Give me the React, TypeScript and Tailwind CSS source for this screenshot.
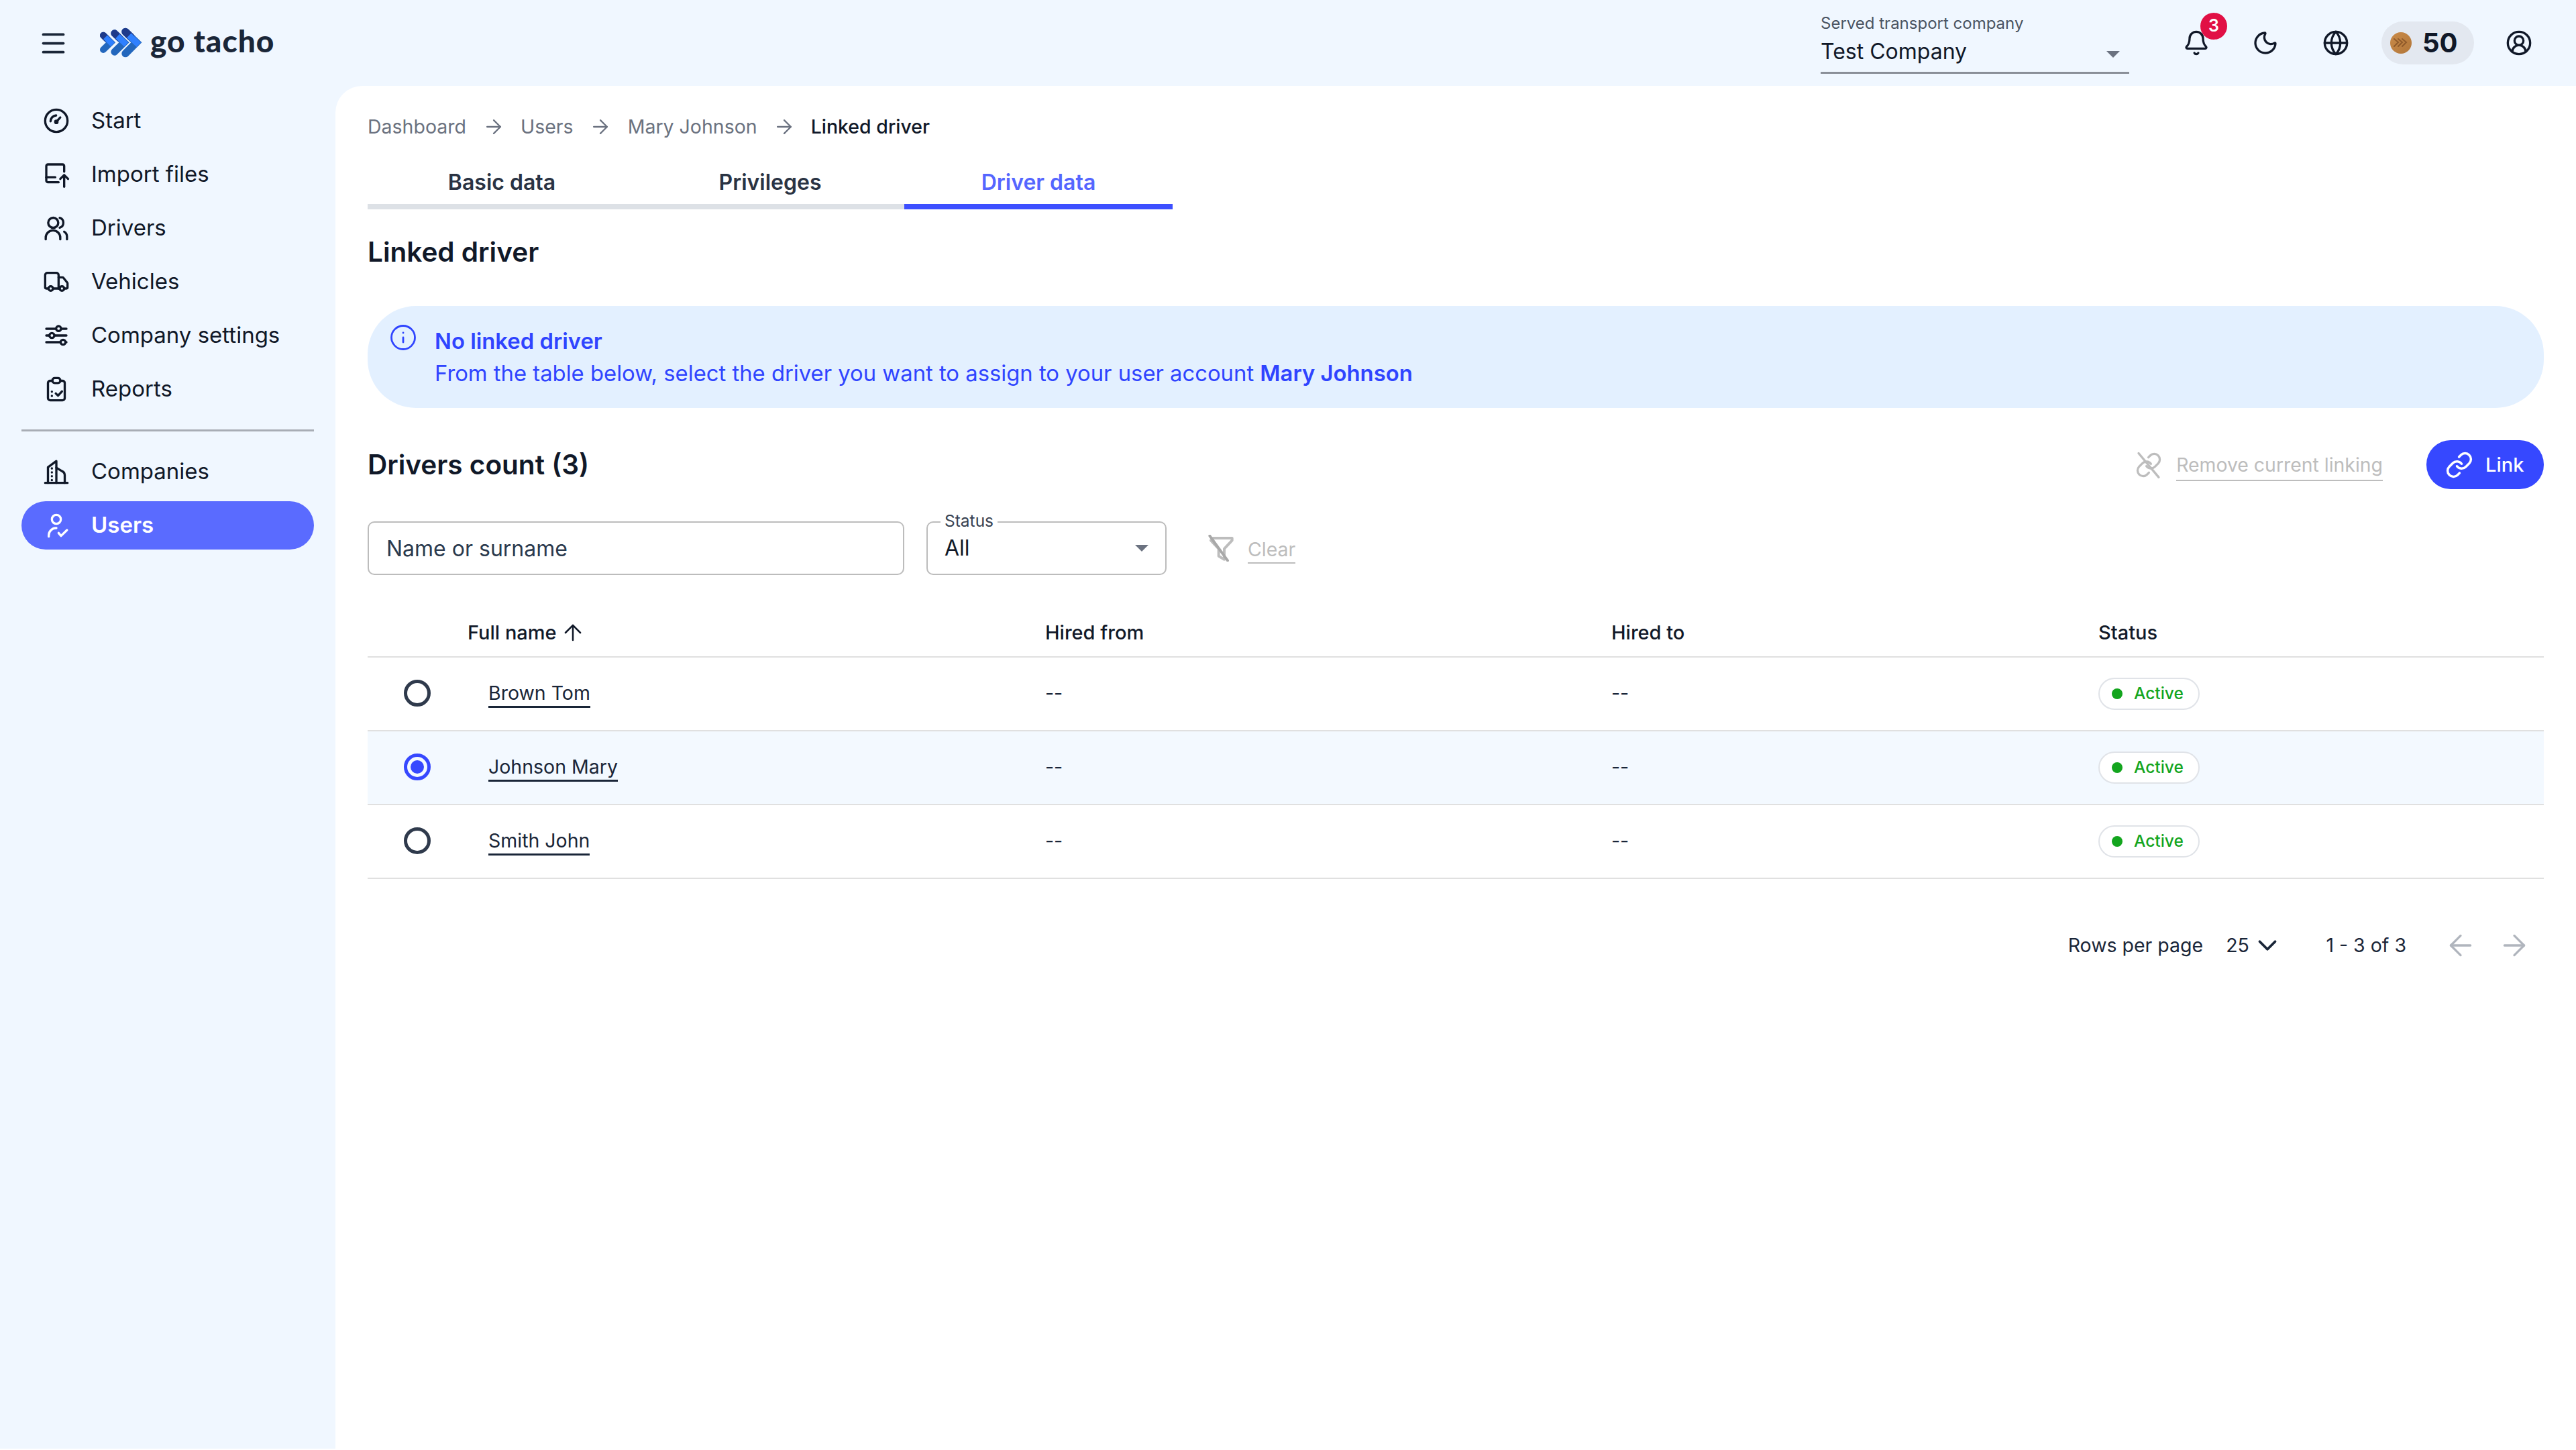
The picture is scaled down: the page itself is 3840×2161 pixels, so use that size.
import React from "react";
import { ArrowRight, ArrowUp, ArrowLeft, Bell, ChevronDown, CircleUserRound, Globe, Info, Link as LinkIcon, Menu, Moon, Truck } from "lucide-react";

function Ic({ children, className = "" }: { children: React.ReactNode; className?: string }) {
  return (
    <svg viewBox="0 0 24 24" fill="none" stroke="currentColor" strokeWidth={2} strokeLinecap="round" strokeLinejoin="round" className={"w-[40px] h-[40px] shrink-0 " + className}>
      {children}
    </svg>
  );
}

const StartIcon = () => (
  <Ic>
    <circle cx="12" cy="12" r="10" />
    <path d="M12 13l3.5-4" />
    <path d="M6.8 12.5a5.3 5.3 0 0 1 5-5.3" />
    <circle cx="12" cy="13" r="1" fill="currentColor" />
  </Ic>
);
const ImportIcon = () => (
  <Ic>
    <path d="M19 9.5V4.5A1.5 1.5 0 0 0 17.5 3H4.5A1.5 1.5 0 0 0 3 4.5v13A1.5 1.5 0 0 0 4.5 19H14" />
    <path d="M3 14.5h8" />
    <path d="M19 23V13" />
    <path d="M15.5 16l3.5-3.5 3.5 3.5" />
  </Ic>
);
const DriversIcon = () => (
  <Ic>
    <circle cx="9.2" cy="7.2" r="4.5" />
    <path d="M15 2.8a4.6 4.6 0 0 1 0 8.8" />
    <path d="M2.5 22v-1.5a6.5 6.5 0 0 1 13 0V22" />
    <path d="M19 15.2a5 5 0 0 1 2.5 4.3V22" />
  </Ic>
);
const SettingsIcon = () => (
  <Ic>
    <path d="M3 6h18M3 12h18M3 18h18" />
    <circle cx="14" cy="5.8" r="2.2" fill="#f0f7ff" />
    <circle cx="8" cy="12" r="2.2" fill="#f0f7ff" />
    <circle cx="18" cy="18" r="2.2" fill="#f0f7ff" />
  </Ic>
);
const ReportsIcon = () => (
  <Ic>
    <rect x="4.5" y="4.5" width="15" height="17.5" rx="2" />
    <rect x="8.5" y="2" width="7" height="4.5" rx="2" fill="#f0f7ff" />
    <path d="M11.5 15.8l2 2 3.5-3.8" />
    <path d="M8 14.2v.1M8 18v.1" />
  </Ic>
);
const CompaniesIcon = () => (
  <Ic>
    <path d="M2 22h20" />
    <path d="M4.5 22V8l7.5-5.5V22" />
    <path d="M12 8.5l5 3a4 4 0 0 1 2.5 3.5v7" />
    <path d="M8 9v.1M8 12.5v.1M8 16v.1M8 19.5v.1" />
  </Ic>
);
const UsersIcon = () => (
  <Ic>
    <circle cx="12" cy="6.6" r="4" />
    <path d="M5.2 22v-1.2a6.5 6.5 0 0 1 6.8-6.4" />
    <path d="M14 18.8l2.2 2.6 5.3-5.2" />
  </Ic>
);

const Logo = () => (
  <svg viewBox="0 0 240 180" fill="none" strokeLinecap="round" className="w-[80px] h-[60px] shrink-0">
    <g strokeWidth="30">
      <path d="M42 56L75 88L42 120" stroke="#2367bd" />
      <path d="M42 56L58 72" stroke="#1e3a8a" />
      <path d="M60 73L75 88" stroke="#2f80ff" strokeLinecap="square" strokeWidth="25" />
    </g>
    <g strokeWidth="32">
      <path d="M92 47L135 88L92 130" stroke="#2367bd" />
      <path d="M92 47L113 67" stroke="#1e3a8a" />
      <path d="M115 69L135 88" stroke="#2f80ff" strokeLinecap="square" strokeWidth="26" />
    </g>
    <g strokeWidth="34">
      <path d="M141 40L190 88L141 137" stroke="#2367bd" />
      <path d="M141 40L165 63" stroke="#1e3a8a" />
      <path d="M167 66L190 88" stroke="#2f80ff" strokeLinecap="square" strokeWidth="28" />
    </g>
  </svg>
);

const Caret = ({ className = "" }: { className?: string }) => (
  <svg viewBox="0 0 20 10" className={"w-[20px] h-[10px] shrink-0 " + className}>
    <polygon points="0,0 20,0 10,10" fill="#6b7280" />
  </svg>
);

const Coin = () => (
  <svg viewBox="0 0 32 32" className="w-[32px] h-[32px] shrink-0" fill="none">
    <defs>
      <linearGradient id="coin" x1="0" y1="0" x2="1" y2="1">
        <stop offset="0" stopColor="#c98a48" />
        <stop offset="1" stopColor="#b2773a" />
      </linearGradient>
    </defs>
    <circle cx="16" cy="16" r="16" fill="url(#coin)" />
    <g stroke="#8f5a2a" strokeWidth="2" strokeLinecap="round">
      <path d="M6 10l6 5-6 6" />
      <path d="M12 10l6 5-6 6" />
      <path d="M18 10l6 5-6 6" />
    </g>
  </svg>
);

const navTop = [
  { label: "Start", icon: <StartIcon /> },
  { label: "Import files", icon: <ImportIcon /> },
  { label: "Drivers", icon: <DriversIcon /> },
  { label: "Vehicles", icon: <Truck className="w-[40px] h-[40px] shrink-0" strokeWidth={2} /> },
  { label: "Company settings", icon: <SettingsIcon /> },
  { label: "Reports", icon: <ReportsIcon /> },
];

function NavItem({ label, icon, active = false }: { label: string; icon: React.ReactNode; active?: boolean }) {
  return (
    <div className={"flex items-center h-[72px] pl-[32px] gap-[32px] rounded-[36px] text-[33px] " + (active ? "bg-[#5a6bff] text-white font-semibold" : "text-[#101828]")}>
      {icon}
      <span>{label}</span>
    </div>
  );
}

const rows = [
  { name: "Brown Tom", selected: false },
  { name: "Johnson Mary", selected: true },
  { name: "Smith John", selected: false },
];

function Row({ name, selected }: { name: string; selected: boolean }) {
  return (
    <div className={"grid grid-cols-[149px_861px_844px_726px_1fr] items-center h-[110px] border-b-[2.5px] border-[#e0e0e0] text-[28.5px] text-[#1a2638] " + (selected ? "bg-[#f3f9ff]" : "")}>
      <div className="flex justify-center pr-[1px] -mt-[1px]">
        {selected ? (
          <span className="w-[40px] h-[40px] rounded-full border-[5px] border-[#3648ff] flex items-center justify-center">
            <span className="w-[20px] h-[20px] rounded-full bg-[#3648ff]" />
          </span>
        ) : (
          <span className="w-[40px] h-[40px] rounded-full border-[5px] border-[#2f3a4c]" />
        )}
      </div>
      <div className="pl-[31px]">
        <span className="border-b-[3px] border-[#1a2638] pb-[1px] leading-[36px] inline-block">{name}</span>
      </div>
      <div>--</div>
      <div>--</div>
      <div>
        <span className="inline-flex items-center w-[151px] h-[48px] pl-[18px] gap-[17px] rounded-full border-[2.5px] border-[#e0e3e8] bg-white text-[24.5px] font-medium text-[#13a51e]">
          <span className="w-[16px] h-[16px] rounded-full bg-[#13a51e]" />
          Active
        </span>
      </div>
    </div>
  );
}

export default function App() {
  return (
    <div className="w-[3840px] h-[2159px] bg-[#f0f7ff] flex flex-col font-['Inter',sans-serif] overflow-hidden">
      <header className="h-[128px] shrink-0 flex items-center pl-[57px] pr-[65px]">
        <Menu className="w-[45px] h-[45px] text-[#1a2638] shrink-0" strokeWidth={2} />
        <div className="ml-[38px]"><Logo /></div>
        <span className="ml-[4px] font-['Lato',sans-serif] font-black text-[46px] tracking-[1px] text-[#1a2638] leading-none -mt-[6px]">go tacho</span>
        <div className="ml-auto self-start w-[460px] h-[110px] flex flex-col border-b-[3px] border-[#8a8f98]">
          <span className="text-[24px] leading-[30px] text-[#4b5563] mt-[20px]">Served transport company</span>
          <div className="flex items-center justify-between pr-[14px] mt-[5px]">
            <span className="text-[32px] leading-[44px] text-[#101828]">Test Company</span>
            <Caret className="mt-[8px]" />
          </div>
        </div>
        <div className="relative ml-[80px]">
          <Bell className="w-[40px] h-[40px] text-[#101828]" strokeWidth={2} />
          <span className="absolute left-[26px] -top-[25px] w-[40px] h-[40px] rounded-full bg-[#e11045] text-white text-[25px] font-semibold flex items-center justify-center">3</span>
        </div>
        <Moon className="w-[40px] h-[40px] ml-[63px] text-[#101828]" strokeWidth={2} />
        <Globe className="w-[40px] h-[40px] ml-[65px] text-[#101828]" strokeWidth={2} />
        <div className="ml-[48px] w-[138px] h-[64px] rounded-[32px] bg-[#e3e8f0] flex items-center pl-[13px] gap-[16px]">
          <Coin />
          <span className="text-[40px] font-bold text-[#101828] leading-none">50</span>
        </div>
        <CircleUserRound className="w-[40px] h-[40px] ml-[47px] text-[#101828]" strokeWidth={2} />
      </header>

      <div className="flex flex-1 min-h-0">
        <aside className="w-[500px] shrink-0 px-[32px] pt-[16px]">
          <nav className="flex flex-col gap-[8px]">
            {navTop.map((n) => (
              <NavItem key={n.label} label={n.label} icon={n.icon} />
            ))}
          </nav>
          <div className="h-[2.5px] bg-[#a8adb5] mt-[24px] mb-[24px]" />
          <nav className="flex flex-col gap-[8px]">
            <NavItem label="Companies" icon={<CompaniesIcon />} />
            <NavItem label="Users" icon={<UsersIcon />} active />
          </nav>
        </aside>

        <main className="flex-1 bg-white rounded-tl-[40px] pl-[48px] pr-[48px] pt-[41px] text-[#101828]">
          <div className="flex items-center h-[40px] text-[28.5px] text-[#6b7280]">
            <span>Dashboard</span>
            <ArrowRight className="w-[34px] h-[34px] mx-[23.5px] shrink-0" strokeWidth={1.6} />
            <span>Users</span>
            <ArrowRight className="w-[34px] h-[34px] mx-[23.5px] shrink-0" strokeWidth={1.6} />
            <span>Mary Johnson</span>
            <ArrowRight className="w-[34px] h-[34px] mx-[23px] shrink-0" strokeWidth={1.6} />
            <span className="font-medium text-[#101828]">Linked driver</span>
          </div>

          <div className="flex mt-[23px] text-[32px] font-semibold">
            <div className="w-[400px] h-[80px] pt-[8px] flex items-center justify-center border-b-[8px] border-[#dde1e6] text-[#2a3343]">Basic data</div>
            <div className="w-[400px] h-[80px] pt-[8px] flex items-center justify-center border-b-[8px] border-[#dde1e6] text-[#2a3343]">Privileges</div>
            <div className="w-[400px] h-[80px] pt-[8px] flex items-center justify-center border-b-[8px] border-[#3d4fff] text-[#5566ff]">Driver data</div>
          </div>

          <h1 className="mt-[34px] h-[60px] leading-[60px] text-[40.5px] font-semibold">Linked driver</h1>

          <div className="mt-[50px] h-[152px] rounded-[72px] bg-[#e3f0ff] flex pl-[32px] text-[#2f44ff] text-[32.8px]">
            <Info className="w-[42px] h-[42px] mt-[26px] shrink-0" strokeWidth={1.6} />
            <div className="ml-[26px] pt-[27px]">
              <div className="h-[50px] leading-[50px] font-semibold">No linked driver</div>
              <div className="h-[47px] leading-[47px]">
                From the table below, select the driver you want to assign to your user account <span className="font-semibold">Mary Johnson</span>
              </div>
            </div>
          </div>

          <div className="mt-[48px] h-[73px] flex items-center">
            <h2 className="text-[40.5px] font-semibold pt-[2px]">Drivers count (3)</h2>
            <div className="ml-auto flex items-center text-[#bdbdbd]">
              <svg viewBox="0 0 24 24" fill="none" stroke="currentColor" strokeWidth={2} strokeLinecap="round" className="w-[40px] h-[44px] shrink-0">
                <path d="M10 13a5 5 0 0 0 7.54.54l3-3a5 5 0 0 0-7.07-7.07l-1.72 1.71" />
                <path d="M14 11a5 5 0 0 0-7.54-.54l-3 3a5 5 0 0 0 7.07 7.07l1.71-1.71" />
                <path d="M3 1.5L21 23" />
              </svg>
              <span className="ml-[21px] text-[28.4px] border-b-[2.5px] border-[#bdbdbd] leading-[40px] h-[44px] mt-[4px]">Remove current linking</span>
            </div>
            <button className="ml-[65px] w-[175px] h-[73px] rounded-[36px] bg-[#3648ff] text-white text-[29px] font-medium flex items-center pl-[28px] gap-[18px]">
              <LinkIcon className="w-[42px] h-[42px] shrink-0" strokeWidth={2} />
              Link
            </button>
          </div>

          <div className="mt-[48px] h-[80px] flex items-center">
            <input
              readOnly
              placeholder="Name or surname"
              className="w-[800px] h-[80px] rounded-[10px] border-[2.5px] border-[#bcbcbc] pl-[26px] text-[32px] placeholder:text-[#2b3a4e] outline-none"
            />
            <div className="relative ml-[33px] w-[358px] h-[80px] rounded-[10px] border-[2.5px] border-[#bcbcbc] flex items-center justify-between pl-[25px] pr-[25px] text-[32px]">
              <span className="absolute left-[19px] -top-[18px] bg-white px-[6px] text-[24.5px] leading-[30px] text-[#374151]">Status</span>
              <span>All</span>
              <Caret />
            </div>
            <svg viewBox="0 0 24 24" fill="none" stroke="#bdbdbd" strokeWidth={2.4} strokeLinecap="round" strokeLinejoin="round" className="w-[40px] h-[40px] ml-[61px] shrink-0">
              <path d="M5 3h17v2l-7 7.5V22l-5-3v-6.5L3 5" />
              <path d="M2 1l16 22" stroke="#a8a8a8" />
            </svg>
            <span className="ml-[20px] text-[28.5px] text-[#bdbdbd] border-b-[2.5px] border-[#bdbdbd] leading-[38px] mt-[6px]">Clear</span>
          </div>

          <div className="mt-[51px] grid grid-cols-[149px_861px_844px_726px_1fr] items-center h-[71.5px] border-b-[2.5px] border-[#e0e0e0] text-[29px] font-medium">
            <div />
            <div className="flex items-center">
              Full name
              <ArrowUp className="w-[38px] h-[38px] ml-[5px]" strokeWidth={1.6} />
            </div>
            <div>Hired from</div>
            <div>Hired to</div>
            <div>Status</div>
          </div>

          {rows.map((r) => (
            <Row key={r.name} name={r.name} selected={r.selected} />
          ))}

          <div className="mt-[74.5px] h-[50px] flex items-center justify-end pr-[19px] text-[28.5px] text-[#1a2638]">
            <span>Rows per page</span>
            <span className="ml-[34px]">25</span>
            <ChevronDown className="w-[46px] h-[46px] ml-[4.5px]" strokeWidth={2} />
            <span className="ml-[64px]">1 - 3 of 3</span>
            <ArrowLeft className="w-[50px] h-[50px] ml-[56px] text-[#b0b5bd]" strokeWidth={1.6} />
            <ArrowRight className="w-[50px] h-[50px] ml-[30px] text-[#b0b5bd]" strokeWidth={1.6} />
          </div>
        </main>
      </div>
    </div>
  );
}
